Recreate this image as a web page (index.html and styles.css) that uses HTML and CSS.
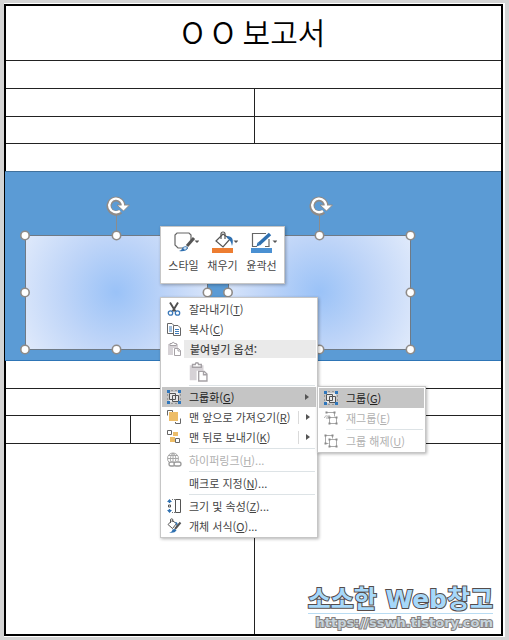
FILE: index.html
```html
<!DOCTYPE html>
<html lang="ko">
<head>
<meta charset="utf-8">
<meta name="viewport" content="width=device-width, initial-scale=1">
<title>보고서</title>
<link rel="stylesheet" href="styles.css">
</head>
<body>
<svg class="defs" aria-hidden="true">
  <defs>
    <radialGradient id="glow" gradientUnits="userSpaceOnUse" cx="101" cy="107" r="107">
      <stop offset="0" stop-color="#9ac2f7"/>
      <stop offset=".5" stop-color="#bfd5f8"/>
      <stop offset="1" stop-color="#e0eafb"/>
    </radialGradient>
    <symbol id="selected-shape" viewBox="0 0 202 172">
      <rect x="10.500" y="50.500" width="182" height="114" fill="url(#glow)" stroke="#6f7a86"/>
      <path d="M101.500 28v22" stroke="#8c8c8c"/>
      <g fill="none">
        <path d="M105.500 26.500A7 7 0 1 1 108 20.500" stroke="#8f8b88" stroke-width="5"/>
        <path d="M102 20h12.500l-6 6z" fill="#fff" stroke="#8f8b88"/>
        <path d="M105 26A6.800 6.800 0 1 1 107.800 21.500" stroke="#fff" stroke-width="2.400"/>
      </g>
      <g fill="#fff" stroke="#8f8b88" stroke-width="1.600">
        <circle cx="10" cy="50.500" r="4.200"/><circle cx="101.500" cy="50.500" r="4.200"/><circle cx="192.500" cy="50.500" r="4.200"/>
        <circle cx="10" cy="107.500" r="4.200"/><circle cx="192.500" cy="107.500" r="4.200"/>
        <circle cx="10" cy="164.500" r="4.200"/><circle cx="101.500" cy="164.500" r="4.200"/><circle cx="192.500" cy="164.500" r="4.200"/>
      </g>
    </symbol>
    <symbol id="i-cut" viewBox="0 0 16 16">
      <path d="M4 1.500l5.500 9M12 1.500l-5.500 9" fill="none" stroke="#505050" stroke-width="1.900"/>
      <g fill="none" stroke="#3b78b8" stroke-width="1.300"><circle cx="4.500" cy="12" r="2.200"/><circle cx="11.500" cy="12" r="2.200"/></g>
    </symbol>
    <symbol id="i-copy" viewBox="0 0 16 16">
      <path d="M7 12.500H1.500v-10h4.500l2 2" fill="none" stroke="#666"/>
      <path d="M7.500 4.500h4.500l2.500 2.500v7.500h-7z" fill="#fff" stroke="#666"/>
      <path d="M3 6h3M3 8h3M3 10h3M9 8.500h4M9 10.500h4M9 12.500h4" stroke="#3f7cba"/>
    </symbol>
    <symbol id="i-paste" viewBox="0 0 16 16">
      <path d="M2 3h10v4H7v7H2z" fill="#d6d2d6"/>
      <path d="M4 4.500V2.500h2a1.200 1.200 0 0 1 2.400 0h2v2z" fill="#fff" stroke="#a5a1a5"/>
      <path d="M8.500 7.500h4l2 2v5h-6z" fill="#fff" stroke="#a5a1a5"/><path d="M12 7.500v2.500h2.500" fill="none" stroke="#a5a1a5"/>
    </symbol>
    <symbol id="i-group" viewBox="0 0 16 16">
      <path d="M3 3h10v10H3z" fill="#e8e8e8"/>
      <path d="M3.500 4.500h6v6h-6zM6.500 6.500h6v6h-6z" fill="none" stroke="#555"/>
      <path d="M5 1.500h6M5 14.500h6M1.500 5v6M14.500 5v6" fill="none" stroke="#999" stroke-dasharray="2 2"/>
      <path d="M1 1h3v3H1zM12 1h3v3h-3zM1 12h3v3H1zM12 12h3v3h-3z" fill="#2f76bb"/>
    </symbol>
    <symbol id="i-regroup" viewBox="0 0 16 16">
      <path d="M3.500 2.500h8v4M1.500 8C2 5.500 4 5 6 7.500M6 5v3H3M6.500 7.500h7v6h-7z" fill="none" stroke="#aaa"/>
      <path d="M2.500 1.500h2v2h-2zM10.500 1.500h2v2h-2zM5.500 6.500h2v2h-2zM12.500 6.500h2v2h-2zM5.500 12.500h2v2h-2zM12.500 12.500h2v2h-2z" fill="#888"/>
    </symbol>
    <symbol id="i-ungroup" viewBox="0 0 16 16">
      <path d="M2.500 2.500h7v3M2.500 2.500v8h3M6.500 6.500h7v7h-7z" fill="none" stroke="#aaa"/>
      <path d="M1.500 1.500h2v2h-2zM8.500 1.500h2v2h-2zM1.500 9.500h2v2h-2zM5.500 5.500h2v2h-2zM12.500 5.500h2v2h-2zM5.500 12.500h2v2h-2zM12.500 12.500h2v2h-2z" fill="#888"/>
    </symbol>
    <symbol id="i-front" viewBox="0 0 16 16">
      <path d="M3 3h9v9H3z" fill="#edbd68"/>
      <path d="M1.500 6.500v-5h5v1.500M14.500 9.500v5h-5v-1.500" fill="none" stroke="#666"/>
    </symbol>
    <symbol id="i-back" viewBox="0 0 16 16">
      <path d="M7 3h5v4H7zM4 8h5v5H4z" fill="#edbd68"/>
      <path d="M1.500 1.500h4v4h-4zM9.500 9.500h4v4h-4z" fill="#fff" stroke="#666"/>
    </symbol>
    <symbol id="i-link" viewBox="0 0 16 16">
      <g fill="none" stroke="#a8a8a8"><circle cx="7" cy="6.500" r="5.500"/><path d="M1.500 6.500h11M7 1v9M3 3.500h8M7 1C4 4 4 8 5 10M7 1c3 3 3 5 2.500 8"/></g>
      <path d="M3 9h11v6H3z" fill="#fff"/>
      <g fill="#fff" stroke="#999" stroke-width="1.300"><rect x="3" y="10" width="6" height="4" rx="2"/><rect x="8" y="10" width="7" height="4" rx="2"/></g>
    </symbol>
    <symbol id="i-size" viewBox="0 0 16 16">
      <path d="M3.500 2v3M3.500 11v3" stroke="#2f70b0" stroke-width="1.500"/>
      <path d="M1 4l2.500-3L6 4zM1 12l2.500 3L6 12z" fill="#2f70b0"/>
      <path d="M2.500 7h2v2h-2zM9.500 1.500h5v13h-5z" fill="none" stroke="#555"/>
      <path d="M6 1.500h3M6 14.500h3" stroke="#777" stroke-dasharray="1 1"/>
    </symbol>
    <symbol id="i-format" viewBox="0 0 16 16">
      <path d="M2 6.500l4-4 4.500 3-4 5z" fill="#fff" stroke="#555"/><path d="M4.500 5V2a1.200 1.200 0 0 1 2.400 0v2" fill="none" stroke="#555"/>
      <path d="M9 4q4 0 2 5l-1-3z" fill="#2f70b0"/>
      <path d="M14.500 4.500L9 11" stroke="#555" stroke-width="2"/>
      <path d="M3 14.500q3 0 3.500-3 3-1.500 4 1-2 3-7.500 2z" fill="#2f70b0"/>
    </symbol>
  </defs>
</svg>

<main class="paper">
  <table class="report">
    <colgroup><col class="col-a"><col class="col-b"><col></colgroup>
    <tbody>
      <tr class="title-row"><th colspan="3"><h1>O O 보고서</h1></th></tr>
      <tr><td colspan="3"></td></tr>
      <tr><td colspan="2"></td><td></td></tr>
      <tr class="short"><td colspan="2"></td><td></td></tr>
      <tr class="open"><td colspan="3"></td></tr>
      <tr class="drawing-row"><td colspan="3">
        <div class="drawing">
          <svg class="shape shape-left" role="img" aria-label="도형 1"><use href="#selected-shape"/></svg>
          <svg class="shape shape-right" role="img" aria-label="도형 2"><use href="#selected-shape"/></svg>
        </div>
      </td></tr>
      <tr><td colspan="3"></td></tr>
      <tr class="short"><td colspan="3"></td></tr>
      <tr><td></td><td class="open-side"></td><td></td></tr>
      <tr class="last-row"><td colspan="2"></td><td>
        <div class="brand"><strong>소소한 Web창고</strong><a href="https://sswh.tistory.com">https://sswh.tistory.com</a></div>
      </td></tr>
    </tbody>
  </table>
</main>

<div class="mini-bar" role="toolbar">
  <button type="button">
    <svg viewBox="0 0 28 22"><path d="M17 17H7L4 14V4l2-2h12l2 2v5" fill="none" stroke="#666" stroke-width="1.200"/><path d="M23 7l-7 8" stroke="#555" stroke-width="3"/><path d="M8 20q3-1 4-4 4-2 5 1-2 4-9 3z" fill="#2f70b0"/><path d="M12 17q3-2 4 0l-2 2z" fill="#cfe2f4"/><path d="M23.500 9.500h5L26 12z" fill="#555"/></svg>
    <span>스타일</span>
  </button>
  <button type="button">
    <svg viewBox="0 0 28 22"><path d="M6 10l7-7 7 5-7 8z" fill="#fff" stroke="#555" stroke-width="1.200"/><path d="M11 8V3a2 2 0 0 1 4 0v5" fill="none" stroke="#555" stroke-width="1.200"/><path d="M17 5q8 0 5 10-1-6-5-8z" fill="#2f70b0"/><path d="M2 17h21v5H2z" fill="#ed7d31"/><path d="M23.500 9.500h5L26 12z" fill="#555"/></svg>
    <span>채우기</span>
  </button>
  <button type="button">
    <svg viewBox="0 0 28 22"><path d="M17 2.500H3.500v13H8M20 8v7.500h-4" fill="none" stroke="#666" stroke-width="1.200"/><path d="M21 3L10 13" stroke="#2f70b0" stroke-width="3.500"/><path d="M7.500 15.500l1-4 3 2.500z" fill="#2f70b0"/><path d="M2 17h21v5H2z" fill="#4a90d2"/><path d="M23.500 9.500h5L26 12z" fill="#555"/></svg>
    <span>윤곽선</span>
  </button>
</div>

<div class="menu context-menu" role="menu">
  <button type="button" role="menuitem"><svg><use href="#i-cut"/></svg><span>잘라내기(<u>T</u>)</span></button>
  <button type="button" role="menuitem"><svg><use href="#i-copy"/></svg><span>복사(<u>C</u>)</span></button>
  <div class="heading"><svg><use href="#i-paste"/></svg><span>붙여넣기 옵션:</span></div>
  <button type="button" role="menuitem" class="paste-option" aria-label="붙여넣기" disabled><svg><use href="#i-paste"/></svg></button>
  <hr>
  <button type="button" role="menuitem" class="active" aria-haspopup="true" aria-expanded="true"><svg><use href="#i-group"/></svg><span>그룹화(<u>G</u>)</span><i class="arrow"></i></button>
  <button type="button" role="menuitem" class="split"><svg><use href="#i-front"/></svg><span>맨 앞으로 가져오기(<u>R</u>)</span><i class="arrow"></i></button>
  <button type="button" role="menuitem" class="split"><svg><use href="#i-back"/></svg><span>맨 뒤로 보내기(<u>K</u>)</span><i class="arrow"></i></button>
  <hr>
  <button type="button" role="menuitem" disabled><svg><use href="#i-link"/></svg><span>하이퍼링크(<u>H</u>)...</span></button>
  <hr>
  <button type="button" role="menuitem"><svg></svg><span>매크로 지정(<u>N</u>)...</span></button>
  <hr>
  <button type="button" role="menuitem"><svg><use href="#i-size"/></svg><span>크기 및 속성(<u>Z</u>)...</span></button>
  <button type="button" role="menuitem"><svg><use href="#i-format"/></svg><span>개체 서식(<u>O</u>)...</span></button>
</div>

<div class="menu sub-menu" role="menu">
  <button type="button" role="menuitem" class="active"><svg><use href="#i-group"/></svg><span>그룹(<u>G</u>)</span></button>
  <button type="button" role="menuitem" disabled><svg><use href="#i-regroup"/></svg><span>재그룹(<u>E</u>)</span></button>
  <hr>
  <button type="button" role="menuitem" disabled><svg><use href="#i-ungroup"/></svg><span>그룹 해제(<u>U</u>)</span></button>
</div>
</body>
</html>
```
FILE: styles.css
```css
* { box-sizing: border-box; }

body {
  position: relative;
  margin: 0;
  padding: 3px 4px 4px;
  background: #d4d4d4;
  font-family: "Noto Sans CJK KR", "Noto Sans", sans-serif;
  font-size: 11px;
  color: #444;
}

.defs { position: absolute; width: 0; height: 0; }

.paper {
  padding: 1px 2px 1px 0;
  background: #fff;
}

.report {
  width: 100%;
  border: 2px solid #000;
  border-spacing: 0;
  table-layout: fixed;
}
.col-a, .col-b { width: 25%; }

.report td, .report th {
  height: 28px;
  padding: 0;
  border-bottom: 1px solid #222;
}
.report td + td { border-left: 1px solid #222; }
.report .title-row th {
  height: 55px;
  padding-bottom: 4px;
}
.report .short td { height: 27px; }
.report .open td { height: 27px; border-bottom: 0; }
.report .drawing-row td { height: 190px; border-bottom: 0; }
.report .last-row td { height: 190px; border-bottom: 0; vertical-align: bottom; }

h1 {
  margin: 0;
  font-size: 30px;
  font-weight: 350;
  line-height: 40px;
  color: #000;
}

.drawing {
  position: relative;
  height: 190px;
  margin: 0 0 0 -1px;
  background: #5b9bd5;
  border-top: 1px solid #41719c;
  border-bottom: 1px solid #2e75b6;
}
.shape {
  position: absolute;
  top: 13px;
  width: 202px;
  height: 172px;
}
.shape-left { left: 10px; }
.shape-right { left: 213px; }

.brand {
  display: flex;
  flex-direction: column;
  align-items: flex-end;
  padding: 0 8px 2px 0;
  white-space: nowrap;
  font-family: "DejaVu Sans", "Noto Sans CJK KR", sans-serif;
}
.brand strong {
  border-bottom: 1px solid #b9dcf3;
  font-size: 25px;
  font-weight: 700;
  line-height: 26px;
  color: #a6d8fa;
  -webkit-text-stroke: 2px #554c4a;
  paint-order: stroke fill;
}
.brand a {
  font-size: 13px;
  font-weight: 700;
  line-height: 18px;
  color: #c5d3dc;
  text-decoration: none;
  -webkit-text-stroke: 2px #85807e;
  paint-order: stroke fill;
}

button {
  margin: 0;
  padding: 0;
  border: 0;
  background: none;
  font: inherit;
  color: inherit;
}

.mini-bar {
  position: absolute;
  left: 160px;
  top: 226px;
  display: flex;
  padding: 2px 3px;
  border: 1px solid #c6c6c6;
  background: #fff;
  box-shadow: 1px 1px 3px rgba(0, 0, 0, .3);
}
.mini-bar button {
  display: flex;
  flex-direction: column;
  align-items: center;
  width: 39px;
  height: 52px;
  line-height: 16px;
}
.mini-bar svg { width: 28px; height: 22px; margin: 2px 0 4px 3px; }

.menu {
  position: absolute;
  padding: 1px;
  border: 1px solid #c6c6c6;
  background: #fff;
  box-shadow: 1px 1px 3px rgba(0, 0, 0, .3);
}
.context-menu { left: 160px; top: 297px; width: 158px; }
.sub-menu { left: 317px; top: 386px; width: 109px; }

.menu button, .heading {
  display: flex;
  align-items: center;
  width: 100%;
  height: 20px;
  padding-left: 4px;
  line-height: 18px;
  text-align: left;
  white-space: nowrap;
}
.menu svg { flex: none; width: 16px; height: 16px; }
.menu span { flex: 1; padding-left: 7px; }
.menu u { text-underline-offset: 1px; }
.menu button:disabled { color: #b0b0b0; }
.menu .active { background: #c5c5c5; color: #222; }
.menu hr {
  height: 1px;
  margin: 1px 1px 1px 27px;
  border: 0;
  background: #dde3e6;
}
.menu .heading { font-weight: 500; }
.menu .heading span { margin-left: 2px; padding-left: 6px; background: #eaeaea; }
.menu .paste-option { height: 25px; padding-left: 25px; }
.menu .paste-option svg { width: 22px; height: 22px; }

.arrow {
  display: flex;
  align-items: center;
  width: 18px;
  height: 13px;
  padding-left: 7px;
}
.arrow::before {
  content: "";
  border: 3px solid transparent;
  border-left: 4px solid #555;
  border-right: 0;
}
.split .arrow { border-left: 1px solid #dadada; }
```
